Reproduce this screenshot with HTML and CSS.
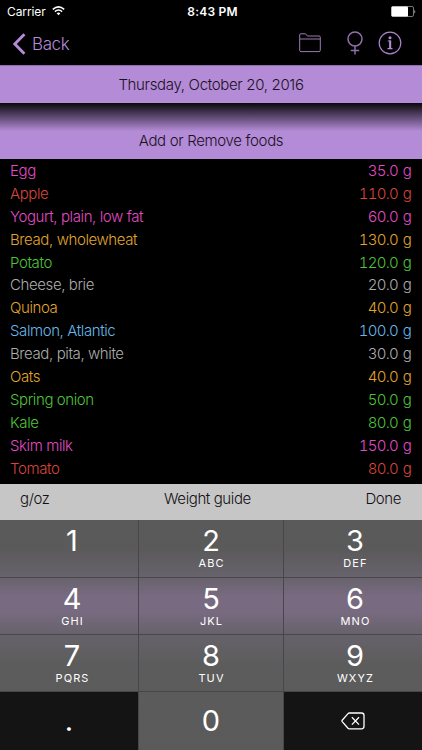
FILE: index.html
```
<!DOCTYPE html>
<html lang="en">
<head>
    <meta charset="UTF-8">
    <meta name="viewport" content="width=device-width, initial-scale=1.0">
    <title>Foods</title>
    <link rel="stylesheet" href="styles.css">
</head>
<body>

    <div class="status-bar">
        <div class="carrier">
            <span>Carrier</span>
            <svg width="13" height="10" viewBox="0 0 13 10" fill="none" stroke="#fff" stroke-width="1.5">
                <path d="M0.8 3.4 Q6.5 -1.6 12.2 3.4"/>
                <path d="M2.9 5.6 Q6.5 2.4 10.1 5.6"/>
                <path d="M6.5 9.3 L4.6 7.2 Q6.5 5.7 8.4 7.2 Z" fill="#fff" stroke="none"/>
            </svg>
        </div>
        <div class="clock">8:43 PM</div>
        <svg class="battery" width="25" height="11" viewBox="0 0 25 11">
            <rect x="0.5" y="0.5" width="22" height="10" rx="1.5" fill="none" stroke="#777"/>
            <rect x="0.5" y="0.5" width="16.5" height="10" rx="1" fill="#fff"/>
            <path d="M23.4 3.5 Q25 5.5 23.4 7.5 Z" fill="#bbb"/>
        </svg>
    </div>

    <div class="nav-bar">
        <div class="back">
            <svg width="14" height="22" viewBox="0 0 14 22" fill="none" stroke="#b38bd6" stroke-width="2.9">
                <path d="M12.4 1.2 L2.8 11 L12.4 20.8"/>
            </svg>
            <span>Back</span>
        </div>
        <div class="nav-icons">
            <svg width="22" height="20" viewBox="0 0 22 20" fill="none" stroke="#9a79b5" stroke-width="1">
                <path d="M0.7 17.3 V2 Q0.7 0.8 1.9 0.8 H6.6 L8.4 3 H20 Q21.3 3 21.3 4.2 V17.3 Q21.3 18.6 20 18.6 H2 Q0.7 18.6 0.7 17.3 Z"/>
                <path d="M0.7 6 H21.3"/>
            </svg>
            <svg class="female" width="16" height="24" viewBox="0 0 16 24" fill="none" stroke="#8f6fac" stroke-width="1.5">
                <circle cx="8" cy="8" r="7"/>
                <path d="M8 15 V23.5 M3.8 19.6 H12.2"/>
            </svg>
            <svg width="24" height="24" viewBox="0 0 24 24">
                <circle cx="12" cy="12" r="10.8" fill="none" stroke="#a984ca" stroke-width="1.2"/>
                <circle cx="12" cy="6.7" r="1.5" fill="#b38bd6"/>
                <path d="M9.7 10 H12.2 V17.6 M9.5 17.6 H14.5" fill="none" stroke="#b38bd6" stroke-width="1.2"/>
                <path d="M12.2 9.5 V18" stroke="#b38bd6" stroke-width="2"/>
            </svg>
        </div>
    </div>

    <div class="date-bar"><span>Thursday, October 20, 2016</span></div>
    <div class="add-bar"><span>Add or Remove foods</span></div>

    <ul class="food-list">
        <li class="pink"><span>Egg</span><span class="weight">35.0 g</span></li>
        <li class="red"><span>Apple</span><span class="weight">110.0 g</span></li>
        <li class="pink"><span>Yogurt, plain, low fat</span><span class="weight">60.0 g</span></li>
        <li class="orange"><span>Bread, wholewheat</span><span class="weight">130.0 g</span></li>
        <li class="green"><span>Potato</span><span class="weight">120.0 g</span></li>
        <li class="grey"><span>Cheese, brie</span><span class="weight">20.0 g</span></li>
        <li class="orange"><span>Quinoa</span><span class="weight">40.0 g</span></li>
        <li class="blue"><span>Salmon, Atlantic</span><span class="weight">100.0 g</span></li>
        <li class="grey"><span>Bread, pita, white</span><span class="weight">30.0 g</span></li>
        <li class="orange"><span>Oats</span><span class="weight">40.0 g</span></li>
        <li class="green"><span>Spring onion</span><span class="weight">50.0 g</span></li>
        <li class="green"><span>Kale</span><span class="weight">80.0 g</span></li>
        <li class="pink"><span>Skim milk</span><span class="weight">150.0 g</span></li>
        <li class="red"><span>Tomato</span><span class="weight">80.0 g</span></li>
    </ul>

    <div class="toolbar">
        <span>g/oz</span>
        <span>Weight guide</span>
        <span>Done</span>
    </div>

    <div class="keypad">
        <div class="key"><b>1</b></div>
        <div class="key"><b>2</b><small>ABC</small></div>
        <div class="key"><b>3</b><small>DEF</small></div>
        <div class="key"><b>4</b><small>GHI</small></div>
        <div class="key"><b>5</b><small>JKL</small></div>
        <div class="key"><b>6</b><small>MNO</small></div>
        <div class="key"><b>7</b><small>PQRS</small></div>
        <div class="key"><b>8</b><small>TUV</small></div>
        <div class="key"><b>9</b><small>WXYZ</small></div>
        <div class="key dark"><b>.</b></div>
        <div class="key zero"><b>0</b></div>
        <div class="key dark">
            <svg width="24" height="18" viewBox="0 0 24 18" fill="none" stroke="#fff" stroke-width="1.3">
                <path d="M8.3 1 H20.5 Q23 1 23 3.5 V14.3 Q23 16.8 20.5 16.8 H8.3 Q7.6 16.8 7 16.2 L1.2 9.6 Q0.7 8.9 1.2 8.2 L7 1.6 Q7.6 1 8.3 1 Z"/>
                <path d="M10.9 5.3 L18 12.6 M18 5.3 L10.9 12.6"/>
            </svg>
        </div>
    </div>

</body>
</html>
```

FILE: styles.css
```
* {
    box-sizing: border-box;
}

body {
    margin: 0;
    width: 422px;
    height: 750px;
    overflow: hidden;
    display: flex;
    flex-direction: column;
    background-color: #000;
    color: #fff;
    font-family: Inter, "Liberation Sans", sans-serif;
    font-weight: 300;
    font-size: 15px;
    letter-spacing: -0.4px;
}

.status-bar {
    height: 22px;
    display: grid;
    grid-template-columns: 1fr auto 1fr;
    align-items: center;
    padding: 0 6px 0 7px;
    font-size: 12px;
    font-weight: 400;
    letter-spacing: -0.1px;
}

.carrier {
    display: flex;
    align-items: center;
    gap: 6px;
}

.clock {
    font-weight: 600;
    letter-spacing: 0.2px;
    padding-left: 2px;
}

.battery {
    justify-self: end;
}

.nav-bar {
    height: 43px;
    display: flex;
    justify-content: space-between;
    align-items: center;
    padding: 0 20px 0 12px;
    color: #b38bd6;
}

.back {
    display: flex;
    align-items: center;
    gap: 6px;
    font-size: 17px;
}

.nav-icons {
    display: flex;
    align-items: center;
    gap: 15px;
    padding-bottom: 1px;
}

.female {
    margin-left: 11px;
}

.date-bar,
.add-bar {
    display: flex;
    justify-content: center;
    color: #1c1024;
    letter-spacing: -0.33px;
}

.date-bar {
    height: 38px;
    align-items: center;
    background-color: #b38bd6;
    border-top: 1px solid #8c6da8;
}

.add-bar {
    height: 56px;
    align-items: flex-end;
    padding-bottom: 9px;
    background: linear-gradient(#0a080c, #b38bd6 28px);
}

.food-list {
    list-style: none;
    margin: 0;
    padding: 0 11px 0 10px;
    height: 325px;
}

.food-list li {
    display: flex;
    justify-content: space-between;
    align-items: center;
    height: 22.9px;
}

.weight {
    font-variant-numeric: tabular-nums;
    letter-spacing: -0.7px;
    word-spacing: 1.2px;
}

.pink { color: #e04cc4; }
.red { color: #d8453c; }
.orange { color: #e0a52c; }
.green { color: #4fc43a; }
.grey { color: #acacac; }
.blue { color: #68b8ea; }

.toolbar {
    height: 36px;
    display: flex;
    justify-content: space-between;
    padding: 5px 21px 0 20px;
    background-color: #c7c6c7;
    color: #111;
}

.keypad {
    flex: 1;
    display: grid;
    grid-template-columns: 139px 145px 138px;
    grid-template-rows: 58px 57px 57px 58px;
    letter-spacing: 0;
    background: linear-gradient(#5a5a5a, #5b5a5b 30px, #68636d 58px, #786a80 76px, #786a80 92px, #67626b 114px, #5c5c5c 145px, #5a5a5a);
}

.key {
    display: flex;
    flex-direction: column;
    align-items: center;
    padding-top: 5px;
    border-right: 1px solid #48454b;
    border-bottom: 1px solid #48454b;
}

.key:nth-child(3n) {
    padding-left: 4px;
    border-right: none;
}

.key:nth-child(3n + 1) {
    padding-left: 6px;
}

.key b {
    font-size: 29px;
    line-height: 32px;
    font-weight: 400;
}

.key small {
    font-size: 11px;
    line-height: 13px;
    font-weight: 400;
    letter-spacing: 1.1px;
    margin-right: -1px;
}

.key.dark,
.key.zero {
    justify-content: center;
    padding: 0;
    border-bottom: none;
}

.key.dark {
    background-color: #141414;
}
```
